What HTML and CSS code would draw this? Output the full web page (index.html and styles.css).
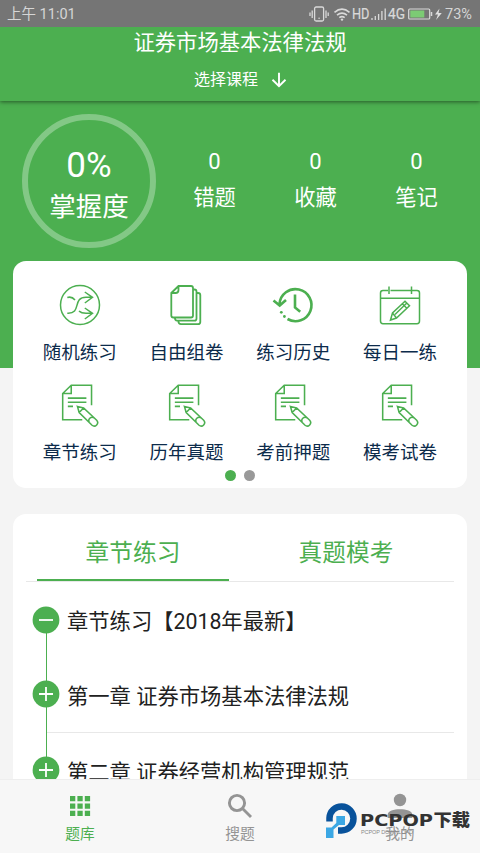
FILE: index.html
```html
<!DOCTYPE html>
<html lang="zh-CN">
<head>
<meta charset="utf-8">
<title>题库</title>
<link rel="stylesheet" href="styles.css">
</head>
<body>
<svg class="defs" width="0" height="0">
  <symbol id="note" viewBox="1.400 2.300 38.800 42.700">
    <path d="M32 24V4.500H12.300L4 12.500V38H23M12.300 4.500V12.500H4M9 17H27M9 21H27M9 25H14"/>
    <path d="M18.300 25 24.300 26.500 37 38.500A3.300 3.300 0 0 1 32.500 43.300L20 31ZM20 31 24.300 26.500M29.800 40.500A3.300 3.300 0 0 1 34.300 36"/>
  </symbol>
</svg>
<div class="phone">
  <div class="status">
    <span class="clock">上午 11:01</span>
    <svg class="status-icons" width="98" height="20" viewBox="0 0 98 20">
      <g fill="none" stroke="#d9d9d9" stroke-width="1.300">
        <rect x="5.600" y="3" width="9" height="14" rx="1.500"/>
        <path d="M3.200 6.500V14M1 8.500V12M17 6.500V14M19.200 8.500V12"/>
        <path d="M25.500 8.300Q33 2 40.500 8.300M28 11.100Q33 7 38 11.100M30.300 13.700Q33 11.600 35.700 13.700" stroke-width="1.600"/>
      </g>
      <circle cx="10.100" cy="14.300" r=".8" fill="#d9d9d9"/>
      <circle cx="33" cy="15.600" r="1.200" fill="#d9d9d9"/>
      <text x="43" y="15.200" textLength="17.500" lengthAdjust="spacingAndGlyphs">HD</text>
      <path d="M63 16V14M66.300 16V12M69.600 16V10M72.900 16V7M76.200 16V4.500" stroke="#d9d9d9" stroke-width="1.300"/>
      <text x="79" y="15.200" textLength="17" lengthAdjust="spacingAndGlyphs">4G</text>
    </svg>
    <svg class="battery" width="36" height="20" viewBox="0 0 36 20">
      <rect x="1.700" y="5" width="21" height="10" rx="1" fill="none" stroke="#d9d9d9" stroke-width="1.200"/>
      <rect x="3.300" y="6.500" width="14" height="7" fill="#7ccb74"/>
      <path d="M24.500 8V12" stroke="#d9d9d9" stroke-width="1.500"/>
      <path d="M32.500 4.500 28 10.500H31L29 16 34.800 9H31.500Z" fill="#e0e0e0"/>
    </svg>
    <span class="percent">73%</span>
  </div>

  <header class="header">
    <h1 class="title">证券市场基本法律法规</h1>
    <div class="course">
      <span>选择课程</span>
      <svg width="16" height="16" viewBox="0 0 16 16"><path d="M8 .8V14M1.500 7.800 8 14.200 14.500 7.800" fill="none" stroke="#fff" stroke-width="1.900"/></svg>
    </div>
  </header>

  <main class="content">
    <section class="summary">
      <div class="ring"><span class="ring-value">0%</span><span class="ring-label">掌握度</span></div>
      <div class="stats">
        <div class="stat"><span class="stat-value">0</span><span class="stat-label">错题</span></div>
        <div class="stat"><span class="stat-value">0</span><span class="stat-label">收藏</span></div>
        <div class="stat"><span class="stat-value">0</span><span class="stat-label">笔记</span></div>
      </div>
    </section>

    <section class="card menu">
      <div class="grid">
        <div class="cell">
          <svg class="icon" viewBox="0 0 44 44"><circle cx="22" cy="22" r="19.500"/><path d="M9.300 14.500C12.500 13.500 15 14.500 17 17M9.300 30.200C24 31 14 14.300 28 14.300H34M26.800 9 34.500 14.300 26.800 20M21 28C23 30 25 30.300 28 30.300H34M26.800 25 34.500 30.300 26.800 36"/></svg>
          <span>随机练习</span>
        </div>
        <div class="cell">
          <svg class="icon sheets" viewBox="0 0 44 44"><path d="M13.500 3H26Q28 3 28 5V32.500Q28 34.500 26 34.500H8.300Q6.300 34.500 6.300 32.500V10ZM13.500 3V7Q13.500 10 10.500 10H6.300M28 6.500H29.500Q31.500 6.500 31.500 8.500V35.500Q31.500 37.700 29.500 37.700H12Q10 37.700 9.800 34.500M31.500 10H33Q35.300 10 35.300 12V39Q35.300 41.200 33 41.200H16Q13.500 41.200 13.300 37.700"/></svg>
          <span>自由组卷</span>
        </div>
        <div class="cell">
          <svg class="icon bold" viewBox="0 0 44 44"><path d="M8.500 21A16 16 0 1 1 16.500 36M2.500 17.500 8.700 22.500 15 17M24 11.500V24.500L29.200 28.800"/><g class="dots"><circle cx="10.300" cy="29.300" r="1.400"/><circle cx="13.400" cy="33.500" r="1.400"/></g></svg>
          <span>练习历史</span>
        </div>
        <div class="cell">
          <svg class="icon" viewBox="0 0 44 44"><path d="M10 7.500H5Q2.500 7.500 2.500 10V38Q2.500 40.700 5 40.700H39Q41.500 40.700 41.500 38V10Q41.500 7.500 39 7.500H12.500M2.500 15.300H41.500M11 3.500V11M33.500 3.500V11"/><path d="M12.500 37 14.500 30 27 18.300 31.500 22.800 18.500 35ZM14.500 30 18.500 35M17 31.500 28.300 20.500M24.300 20.800 28.800 25.300"/></svg>
          <span>每日一练</span>
        </div>
        <div class="cell"><svg class="icon note"><use href="#note"/></svg><span>章节练习</span></div>
        <div class="cell"><svg class="icon note"><use href="#note"/></svg><span>历年真题</span></div>
        <div class="cell"><svg class="icon note"><use href="#note"/></svg><span>考前押题</span></div>
        <div class="cell"><svg class="icon note"><use href="#note"/></svg><span>模考试卷</span></div>
      </div>
      <div class="pager"><i class="dot active"></i><i class="dot"></i></div>
    </section>

    <section class="card chapters">
      <div class="tabs"><div class="tab selected">章节练习</div><div class="tab">真题模考</div></div>
      <div class="tree">
        <div class="node"><div class="rail"><svg width="28" height="28" viewBox="0 0 28 28"><circle cx="14" cy="14" r="13.400"/><path d="M7 14H21"/></svg></div><span>章节练习【2018年最新】</span></div>
        <div class="node lined"><div class="rail"><svg width="28" height="28" viewBox="0 0 28 28"><circle cx="14" cy="14" r="13.400"/><path d="M7 14H21M14 7V21"/></svg></div><span>第一章 证券市场基本法律法规</span></div>
        <div class="node"><div class="rail"><svg width="28" height="28" viewBox="0 0 28 28"><circle cx="14" cy="14" r="13.400"/><path d="M7 14H21M14 7V21"/></svg></div><span>第二章 证券经营机构管理规范</span></div>
      </div>
    </section>
  </main>

  <nav class="nav">
    <div class="nav-item current"><svg width="28" height="28" viewBox="0 0 28 28"><path d="M4 4h5.300v5.300H4zM11.400 4h5.300v5.300h-5.300zM18.800 4h5.300v5.300h-5.300zM4 11.400h5.300v5.300H4zM11.400 11.400h5.300v5.300h-5.300zM18.800 11.400h5.300v5.300h-5.300zM4 18.800h5.300v5.300H4zM11.400 18.800h5.300v5.300h-5.300zM18.800 18.800h5.300v5.300h-5.300z"/></svg><span>题库</span></div>
    <div class="nav-item"><svg width="28" height="28" viewBox="0 0 28 28"><g fill="none" stroke="#949494" stroke-width="2.900"><circle cx="11" cy="11" r="7.600"/><path d="M16.500 16.500 25 25"/></g></svg><span>搜题</span></div>
    <div class="nav-item"><svg width="28" height="28" viewBox="0 0 28 28"><circle cx="14" cy="8" r="6.200"/><path d="M1.700 26V22.500C1.700 15.500 26.300 15.500 26.300 22.500V26Z"/></svg><span>我的</span></div>
  </nav>

  <div class="watermark">
    <svg width="150" height="40" viewBox="0 0 150 40">
      <path d="M3.500 21.500V18A12 12 0 1 1 15.500 30.500H12" fill="none" stroke="#08529b" stroke-width="6.500"/>
      <path d="M10.300 16H19V25H13L7.500 29.500V38H0V27.500H5.500L10.300 23Z" fill="#3ba7e4"/>
      <text class="mark-name" x="34" y="26.200" textLength="73" lengthAdjust="spacingAndGlyphs">PCPOP</text>
      <text class="mark-cn" x="107.500" y="26.300" textLength="36.500" lengthAdjust="spacingAndGlyphs">下载</text>
      <text class="mark-sub" x="35" y="33.800" textLength="52">PCPOP DOWNLOAD</text>
    </svg>
  </div>
</div>
</body>
</html>
```
FILE: styles.css
```css
* { box-sizing: border-box; }
body {
  margin: 0;
  font-family: Roboto, "Noto Sans CJK SC", sans-serif;
  color: #212121;
}
svg { display: block; flex: none; }
.defs { position: absolute; }
.phone {
  position: relative;
  display: flex;
  flex-direction: column;
  width: 480px;
  height: 853px;
  overflow: hidden;
  background: #f4f4f4;
}

.status {
  position: relative;
  z-index: 2;
  display: flex;
  align-items: center;
  height: 27px;
  flex: none;
  padding: 0 5px 0 7px;
  background: #757575;
  color: #d6d6d6;
  font-size: 14.500px;
  line-height: 27px;
}
.clock { margin-right: auto; padding-top: 1px; }
.status-icons text { font: 400 14px Roboto, sans-serif; fill: #d9d9d9; stroke: #d9d9d9; stroke-width: .2px; }
.battery { margin: 0 2px 0 0; }
.percent { width: 30px; padding-top: 1px; white-space: nowrap; }

.header {
  position: relative;
  z-index: 1;
  flex: none;
  height: 74px;
  background: #4caf50;
  color: #fff;
  box-shadow: 0 1px 4px rgba(0, 0, 0, .5);
}
.title { margin: 0; font-size: 21.300px; font-weight: 400; line-height: 31px; text-align: center; }
.course {
  display: flex;
  align-items: center;
  gap: 13px;
  padding: 7px 0 0 194px;
  font-size: 16px;
  line-height: 28px;
}
.course span { padding-top: 1px; }

.content {
  flex: 1;
  min-height: 0;
  overflow: hidden;
  padding: 0 13px;
  background: linear-gradient(#4caf50 267px, #f4f4f4 267px);
}
.summary { display: flex; height: 160px; color: #fff; }
.ring {
  display: flex;
  flex-direction: column;
  align-items: center;
  width: 134px;
  height: 134px;
  margin: 13px 8px 0 9px;
  padding-top: 25px;
  border: 6px solid #83c886;
  border-radius: 50%;
}
.ring-value { font-size: 35px; line-height: 42px; }
.ring-label { font-size: 26.500px; line-height: 40px; }
.stats { display: grid; grid-template-columns: repeat(3, 101px); flex: 1; padding-top: 44px; }
.stat { display: flex; flex-direction: column; align-items: center; }
.stat-value { font-size: 22px; line-height: 34px; }
.stat-label { font-size: 21.300px; line-height: 38px; }

.card { border-radius: 13px; background: #fff; }
.menu { height: 227px; padding: 22px 13.500px 0; }
.grid { display: grid; grid-template-columns: repeat(4, 1fr); grid-auto-rows: 100px; }
.cell {
  display: flex;
  flex-direction: column;
  align-items: center;
  color: #0c2b4b;
  font-size: 18.500px;
  line-height: 28px;
}
.cell span { margin-top: 12px; }
.icon { width: 44px; height: 44px; fill: none; stroke: #4caf50; stroke-width: 1.500; }
.icon.sheets { stroke-width: 1.800; }
.icon.bold { stroke-width: 2.600; }
.dots { fill: #4caf50; stroke: none; }
.icon.note { width: 40px; }
.pager { display: flex; justify-content: center; gap: 8px; margin-top: -13px; }
.dot { width: 11px; height: 11px; border-radius: 50%; background: #999; }
.dot.active { background: #4caf50; }

.chapters { height: 300px; margin-top: 26px; padding: 0 13px; }
.tabs {
  display: flex;
  height: 68px;
  padding: 0 10px 0 11px;
  border-bottom: 1px solid #e8e8e8;
  color: #4caf50;
  font-size: 23.700px;
  line-height: 78px;
}
.tab { flex: 0 0 192px; height: 67px; margin-right: 21px; text-align: center; }
.tab.selected { border-bottom: 2px solid #4caf50; }
.tree { padding-left: 6px; }
.node { display: flex; height: 75.500px; font-size: 21.300px; line-height: 32px; }
.node:first-child { height: 75px; }
.node > span { padding-top: 24px; white-space: pre; }
.rail {
  width: 28px;
  margin-right: 7px;
  padding-top: 23.500px;
  background: linear-gradient(#4caf50, #4caf50) 14px 0 / 1.300px 100% no-repeat;
}
.rail circle { fill: #4caf50; }
.rail path { fill: none; stroke: #fff; stroke-width: 1.800; }
.node:first-child .rail { background-position: 14px 100%; background-size: 1.300px 40px; }
.node.lined .rail { padding-top: 22.500px; }
.node.lined { background: linear-gradient(#e8e8e8, #e8e8e8) 14px 100% / 100% 1px no-repeat; }

.nav {
  display: grid;
  grid-template-columns: repeat(3, 1fr);
  flex: none;
  height: 74px;
  border-top: 1px solid #eee;
  background: #f7f7f7;
}
.nav-item {
  display: flex;
  flex-direction: column;
  align-items: center;
  padding-top: 12px;
  color: #949494;
  fill: #949494;
  font-size: 14.700px;
  line-height: 24px;
}
.nav-item span { margin-top: 2px; }
.nav-item.current { color: #4caf50; fill: #4caf50; }

.watermark { position: absolute; left: 326px; top: 800px; }
.mark-name { font: 700 15px "DejaVu Sans", sans-serif; fill: #333; }
.mark-cn { font: 900 17.500px "Noto Sans CJK SC", sans-serif; fill: #333; }
.mark-sub { font: 5.500px "Liberation Sans", sans-serif; fill: #888; }
```
